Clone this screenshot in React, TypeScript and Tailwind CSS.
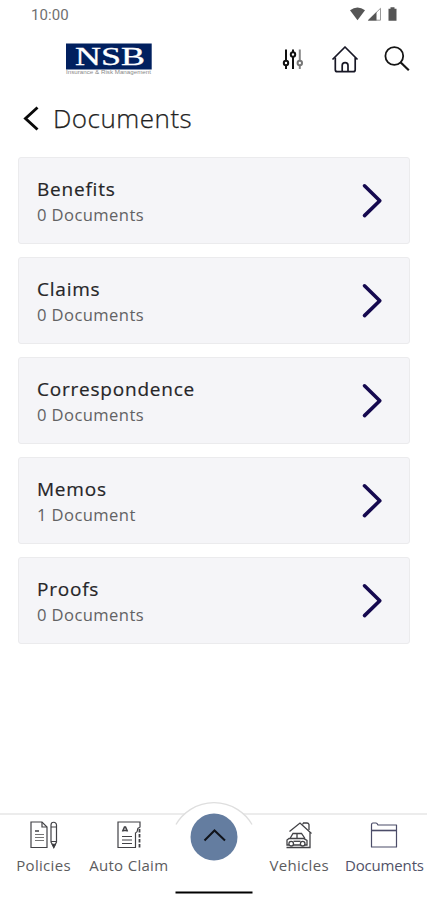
import type { ReactNode } from 'react'

type Category = {
  name: string
  count: number
}

const categories: Category[] = [
  { name: 'Benefits', count: 0 },
  { name: 'Claims', count: 0 },
  { name: 'Correspondence', count: 0 },
  { name: 'Memos', count: 1 },
  { name: 'Proofs', count: 0 },
]

function StatusBar() {
  return (
    <div className="flex h-[29px] items-center justify-between pl-[31px] pr-[28px] text-[#707070]">
      <span className="pt-[2px] text-[15px] leading-none tracking-[0.1px]" style={{ fontFamily: 'Roboto, sans-serif' }}>10:00</span>
      <svg className="h-[15px] w-[50px]" viewBox="0 0 50 15">
        <path d="M1 3.3Q8.5-2.2 16 3.3L8.5 13.200Z" fill="#555" />
        <path d="M19.500 13.200L31.500 1.300v11.900Z" fill="#fff" stroke="#999" strokeWidth="1" />
        <path d="M18.800 13.500L27.500 5v8.500Z" fill="#555" />
        <path d="M41.500 .3h4v1.500h2v12h-8v-12h2Z" fill="#555" />
      </svg>
    </div>
  )
}

function Logo() {
  return (
    <svg className="block h-[33px] w-[86px] overflow-visible" viewBox="0 0 86 33">
      <rect x="0" y="0.500" width="85.700" height="26" fill="#01205f" />
      <text x="9" y="21.500" fontSize="25" textLength="70" lengthAdjust="spacingAndGlyphs" fill="#fff" fontFamily="Liberation Serif, serif" stroke="#fff" strokeWidth="0.3">NSB</text>
      <text x="0" y="31.300" fontSize="4.800" textLength="85" lengthAdjust="spacingAndGlyphs" fill="#8a8a8a" fontFamily="Liberation Sans, sans-serif">Insurance &amp; Risk Management</text>
    </svg>
  )
}

function Header() {
  return (
    <header className="flex h-[60px] items-center justify-between pl-[66px] pr-[17px]">
      <Logo />
      <div className="flex items-center">
        <svg className="mr-[27px] h-[22px] w-[22px]" viewBox="0 0 22 22" fill="none" stroke="#111" strokeWidth="2">
          <path d="M4 1.500v11M4 17.300v3.700M11 1.500v3M11 9v12" />
          <circle cx="4" cy="15" r="2.200" />
          <circle cx="11" cy="6.500" r="2.200" />
          <path d="M17.800 1.500v11M17.800 17.300v3.700" stroke="#888" />
          <circle cx="17.800" cy="15" r="2.200" stroke="#777" />
        </svg>
        <svg className="mr-[25px] h-[28px] w-[28px]" viewBox="0 0 28 28" fill="none" stroke="#171725" strokeWidth="1.7" strokeLinejoin="round">
          <path d="M1.500 14.500L14 2l12.500 12.500" />
          <path d="M4.300 12.500v12.200a2 2 0 0 0 2 2h15.900a2 2 0 0 0 2-2V12.500" />
          <path d="M11.200 26.500v-6a2.900 2.900 0 0 1 5.800 0v6" />
        </svg>
        <svg className="h-[26px] w-[26px]" viewBox="0 0 26 26" fill="none" stroke="#151515" strokeWidth="1.8">
          <circle cx="10.300" cy="10" r="8.900" />
          <path d="M16.500 16.300l8.300 8" strokeWidth="2.200" />
        </svg>
      </div>
    </header>
  )
}

function CategoryCard({ name, count }: Category) {
  return (
    <button className="flex h-[87px] w-full items-center justify-between rounded-[3px] border border-[#ebebed] bg-[#f5f5f8] pl-[18px] pr-[26px] text-left">
      <span className="flex flex-col pt-[1px]">
        <span className="text-[19px] leading-[26px] tracking-[0.78px] text-[#262628] [-webkit-text-stroke:0.2px_#262628]">{name}</span>
        <span className="text-[16.6px] leading-[25px] tracking-[0.4px] text-[#626264]">
          {count} {count === 1 ? 'Document' : 'Documents'}
        </span>
      </span>
      <svg className="h-[36px] w-[22px]" viewBox="0 0 22 36" fill="none" stroke="#15094f" strokeWidth="3.6" strokeLinecap="round" strokeLinejoin="round">
        <path d="M3.500 2.800L18.800 17.700L3.500 32.600" />
      </svg>
    </button>
  )
}

function PoliciesIcon() {
  return (
    <svg className="h-[28px] w-[28px]" viewBox="0 0 28 28" fill="none" stroke="#424246" strokeWidth="1.2">
      <path d="M1 1h11l5 5v20.500H1Z" />
      <path d="M12 1v5h5" />
      <path d="M5 10h4" strokeWidth="1.500" />
      <path d="M5 13.500h9M5 16.500h9M5 19.500h9" stroke="#777" />
      <path d="M21 4a2.700 2.700 0 0 1 5.500 0v17l-2.700 5-2.800-5ZM21 6h5.500M21 20.500h5.500" />
      <path d="M22.300 23.300h3.100l-1.600 3.200Z" fill="#222" />
    </svg>
  )
}

function ClaimIcon() {
  return (
    <svg className="h-[28px] w-[24px]" viewBox="0 0 24 28" fill="none" stroke="#424246" strokeWidth="1.2">
      <path d="M23 6.500V1H1v25.500h18" />
      <path d="M23 6.500q-2.500 0-2.500 2.500t-2 3v14.500" />
      <path d="M22.500 8v19" strokeDasharray="3.500 1.500" strokeWidth="1.800" />
      <path d="M5.500 10.500l2-4.500h1l2 4.500M6 9.500h4" strokeWidth="1.600" />
      <path d="M5 15.500h10M5 19h10M5 22.500h10" />
    </svg>
  )
}

function VehiclesIcon() {
  return (
    <svg className="h-[28px] w-[28px]" viewBox="0 0 28 28" fill="none" stroke="#424246" strokeWidth="1.3">
      <path d="M4.500 10.500L15 2l11.500 10.500" />
      <path d="M17.500 3.500l1-1.500h3.500q1.500 0 2 1.500v5.500M25 11.500v15H1.500" />
      <path d="M5 17.500l3-5h8.500l3.500 5M12 12.500v5M4 17.500h14.500l3.500 2v4.500H2v-5Z" />
      <circle cx="6.200" cy="22.700" r="2.300" fill="#fff" />
      <circle cx="17.700" cy="22.700" r="2.300" fill="#fff" />
      <path d="M8.500 20.300h7" />
    </svg>
  )
}

function FolderIcon() {
  return (
    <svg className="h-[28px] w-[28px]" viewBox="0 0 28 28" fill="none" stroke="#4b4c68" strokeWidth="1.2" strokeLinejoin="round">
      <path d="M1.500 26V4q0-2 1.500-2h3q1 0 2 2h18.500v22Z" />
      <path d="M1.500 9.500h25" strokeWidth="1.600" />
    </svg>
  )
}

function NavItem({ label, icon, active }: { label: string; icon: ReactNode; active?: boolean }) {
  return (
    <button className={`flex min-w-0 flex-col items-center pt-[6px] text-[15px] ${active ? 'tracking-[-0.15px] text-[#515268]' : 'tracking-[0.3px] text-[#5c5c5e]'}`}>
      {icon}
      <span className="mt-[6px] whitespace-nowrap leading-[20px]">{label}</span>
    </button>
  )
}

function BottomNav() {
  return (
    <nav className="h-[87px] border-t-2 border-[#ececec] bg-white">
      <div className="grid grid-cols-5 pl-[1px]">
        <NavItem label="Policies" icon={<PoliciesIcon />} />
        <NavItem label="Auto Claim" icon={<ClaimIcon />} />
        <div className="relative">
          {/* Raised menu button and home indicator */}
          <svg className="absolute -top-[15px] left-1/2 h-[100px] w-[80px] -translate-x-1/2" viewBox="0 0 80 100">
            <path d="M2 24.500A44 44 0 0 1 78 24.500V38H2Z" fill="#fff" />
            <path d="M2 24.500A44 44 0 0 1 78 24.500" fill="none" stroke="#dedede" strokeWidth="1.300" />
            <circle cx="40" cy="37" r="23.500" fill="#647da0" />
            <path d="M30.500 40.500L40.500 30.500l10.500 10" fill="none" stroke="#10131a" strokeWidth="2" />
            <path d="M1.500 92.500h77" stroke="#000" strokeWidth="2" />
          </svg>
        </div>
        <NavItem label="Vehicles" icon={<VehiclesIcon />} />
        <NavItem label="Documents" icon={<FolderIcon />} active />
      </div>
    </nav>
  )
}

export default function App() {
  return (
    <div className="flex h-[900px] w-[427px] flex-col overflow-hidden bg-white" style={{ fontFamily: '"Open Sans", sans-serif' }}>
      <StatusBar />
      <Header />
      <div className="flex h-[60px] items-center pl-[22px]">
        <svg className="h-[26px] w-[18px]" viewBox="0 0 18 26" fill="none" stroke="#090909" strokeWidth="2.900">
          <path d="M15.500 1.500L3.500 12.500l12 11" />
        </svg>
        <h1 className="ml-[13px] pb-[2px] text-[26px] font-light leading-none tracking-[0.5px] text-[#222] [-webkit-text-stroke:0.25px_#222]">Documents</h1>
      </div>
      <main className="flex flex-1 flex-col gap-[13px] pl-[18px] pr-[17px] pt-[8px]">
        {categories.map((category) => (
          <CategoryCard key={category.name} {...category} />
        ))}
      </main>
      <BottomNav />
    </div>
  )
}
